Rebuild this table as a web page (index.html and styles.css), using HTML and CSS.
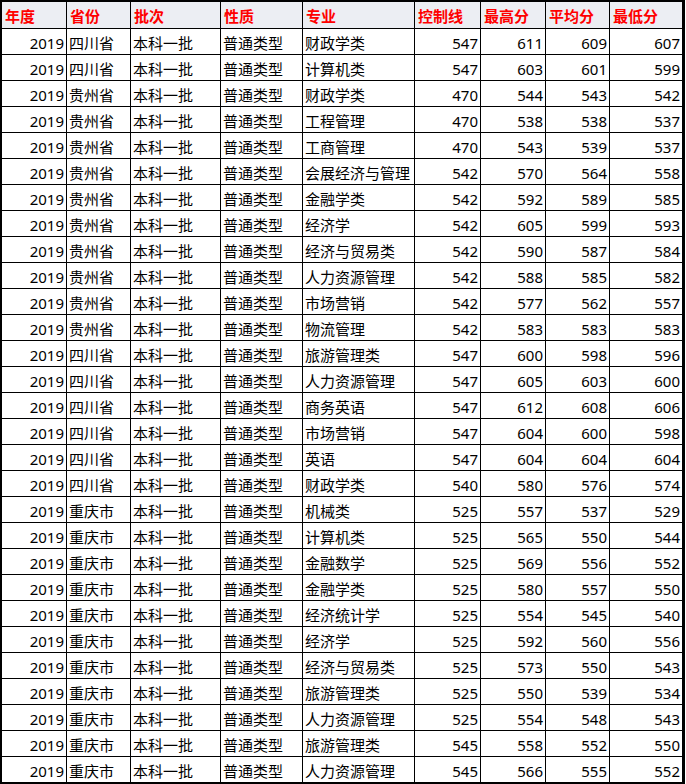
FILE: index.html
```html
<!DOCTYPE html>
<html lang="zh">
<head>
<meta charset="utf-8">
<link rel="stylesheet" href="styles.css">
</head>
<body>
<div class="sheet">
  <div class="row head">
    <div class="c">年度</div><div class="c">省份</div><div class="c">批次</div><div class="c">性质</div><div class="c">专业</div><div class="c">控制线</div><div class="c">最高分</div><div class="c">平均分</div><div class="c">最低分</div>
  </div>
  <div class="row"><div class="c n">2019</div><div class="c">四川省</div><div class="c">本科一批</div><div class="c">普通类型</div><div class="c">财政学类</div><div class="c n">547</div><div class="c n">611</div><div class="c n">609</div><div class="c n">607</div></div>
  <div class="row"><div class="c n">2019</div><div class="c">四川省</div><div class="c">本科一批</div><div class="c">普通类型</div><div class="c">计算机类</div><div class="c n">547</div><div class="c n">603</div><div class="c n">601</div><div class="c n">599</div></div>
  <div class="row"><div class="c n">2019</div><div class="c">贵州省</div><div class="c">本科一批</div><div class="c">普通类型</div><div class="c">财政学类</div><div class="c n">470</div><div class="c n">544</div><div class="c n">543</div><div class="c n">542</div></div>
  <div class="row"><div class="c n">2019</div><div class="c">贵州省</div><div class="c">本科一批</div><div class="c">普通类型</div><div class="c">工程管理</div><div class="c n">470</div><div class="c n">538</div><div class="c n">538</div><div class="c n">537</div></div>
  <div class="row"><div class="c n">2019</div><div class="c">贵州省</div><div class="c">本科一批</div><div class="c">普通类型</div><div class="c">工商管理</div><div class="c n">470</div><div class="c n">543</div><div class="c n">539</div><div class="c n">537</div></div>
  <div class="row"><div class="c n">2019</div><div class="c">贵州省</div><div class="c">本科一批</div><div class="c">普通类型</div><div class="c">会展经济与管理</div><div class="c n">542</div><div class="c n">570</div><div class="c n">564</div><div class="c n">558</div></div>
  <div class="row"><div class="c n">2019</div><div class="c">贵州省</div><div class="c">本科一批</div><div class="c">普通类型</div><div class="c">金融学类</div><div class="c n">542</div><div class="c n">592</div><div class="c n">589</div><div class="c n">585</div></div>
  <div class="row"><div class="c n">2019</div><div class="c">贵州省</div><div class="c">本科一批</div><div class="c">普通类型</div><div class="c">经济学</div><div class="c n">542</div><div class="c n">605</div><div class="c n">599</div><div class="c n">593</div></div>
  <div class="row"><div class="c n">2019</div><div class="c">贵州省</div><div class="c">本科一批</div><div class="c">普通类型</div><div class="c">经济与贸易类</div><div class="c n">542</div><div class="c n">590</div><div class="c n">587</div><div class="c n">584</div></div>
  <div class="row"><div class="c n">2019</div><div class="c">贵州省</div><div class="c">本科一批</div><div class="c">普通类型</div><div class="c">人力资源管理</div><div class="c n">542</div><div class="c n">588</div><div class="c n">585</div><div class="c n">582</div></div>
  <div class="row"><div class="c n">2019</div><div class="c">贵州省</div><div class="c">本科一批</div><div class="c">普通类型</div><div class="c">市场营销</div><div class="c n">542</div><div class="c n">577</div><div class="c n">562</div><div class="c n">557</div></div>
  <div class="row"><div class="c n">2019</div><div class="c">贵州省</div><div class="c">本科一批</div><div class="c">普通类型</div><div class="c">物流管理</div><div class="c n">542</div><div class="c n">583</div><div class="c n">583</div><div class="c n">583</div></div>
  <div class="row"><div class="c n">2019</div><div class="c">四川省</div><div class="c">本科一批</div><div class="c">普通类型</div><div class="c">旅游管理类</div><div class="c n">547</div><div class="c n">600</div><div class="c n">598</div><div class="c n">596</div></div>
  <div class="row"><div class="c n">2019</div><div class="c">四川省</div><div class="c">本科一批</div><div class="c">普通类型</div><div class="c">人力资源管理</div><div class="c n">547</div><div class="c n">605</div><div class="c n">603</div><div class="c n">600</div></div>
  <div class="row"><div class="c n">2019</div><div class="c">四川省</div><div class="c">本科一批</div><div class="c">普通类型</div><div class="c">商务英语</div><div class="c n">547</div><div class="c n">612</div><div class="c n">608</div><div class="c n">606</div></div>
  <div class="row"><div class="c n">2019</div><div class="c">四川省</div><div class="c">本科一批</div><div class="c">普通类型</div><div class="c">市场营销</div><div class="c n">547</div><div class="c n">604</div><div class="c n">600</div><div class="c n">598</div></div>
  <div class="row"><div class="c n">2019</div><div class="c">四川省</div><div class="c">本科一批</div><div class="c">普通类型</div><div class="c">英语</div><div class="c n">547</div><div class="c n">604</div><div class="c n">604</div><div class="c n">604</div></div>
  <div class="row"><div class="c n">2019</div><div class="c">四川省</div><div class="c">本科一批</div><div class="c">普通类型</div><div class="c">财政学类</div><div class="c n">540</div><div class="c n">580</div><div class="c n">576</div><div class="c n">574</div></div>
  <div class="row"><div class="c n">2019</div><div class="c">重庆市</div><div class="c">本科一批</div><div class="c">普通类型</div><div class="c">机械类</div><div class="c n">525</div><div class="c n">557</div><div class="c n">537</div><div class="c n">529</div></div>
  <div class="row"><div class="c n">2019</div><div class="c">重庆市</div><div class="c">本科一批</div><div class="c">普通类型</div><div class="c">计算机类</div><div class="c n">525</div><div class="c n">565</div><div class="c n">550</div><div class="c n">544</div></div>
  <div class="row"><div class="c n">2019</div><div class="c">重庆市</div><div class="c">本科一批</div><div class="c">普通类型</div><div class="c">金融数学</div><div class="c n">525</div><div class="c n">569</div><div class="c n">556</div><div class="c n">552</div></div>
  <div class="row"><div class="c n">2019</div><div class="c">重庆市</div><div class="c">本科一批</div><div class="c">普通类型</div><div class="c">金融学类</div><div class="c n">525</div><div class="c n">580</div><div class="c n">557</div><div class="c n">550</div></div>
  <div class="row"><div class="c n">2019</div><div class="c">重庆市</div><div class="c">本科一批</div><div class="c">普通类型</div><div class="c">经济统计学</div><div class="c n">525</div><div class="c n">554</div><div class="c n">545</div><div class="c n">540</div></div>
  <div class="row"><div class="c n">2019</div><div class="c">重庆市</div><div class="c">本科一批</div><div class="c">普通类型</div><div class="c">经济学</div><div class="c n">525</div><div class="c n">592</div><div class="c n">560</div><div class="c n">556</div></div>
  <div class="row"><div class="c n">2019</div><div class="c">重庆市</div><div class="c">本科一批</div><div class="c">普通类型</div><div class="c">经济与贸易类</div><div class="c n">525</div><div class="c n">573</div><div class="c n">550</div><div class="c n">543</div></div>
  <div class="row"><div class="c n">2019</div><div class="c">重庆市</div><div class="c">本科一批</div><div class="c">普通类型</div><div class="c">旅游管理类</div><div class="c n">525</div><div class="c n">550</div><div class="c n">539</div><div class="c n">534</div></div>
  <div class="row"><div class="c n">2019</div><div class="c">重庆市</div><div class="c">本科一批</div><div class="c">普通类型</div><div class="c">人力资源管理</div><div class="c n">525</div><div class="c n">554</div><div class="c n">548</div><div class="c n">543</div></div>
  <div class="row"><div class="c n">2019</div><div class="c">重庆市</div><div class="c">本科一批</div><div class="c">普通类型</div><div class="c">旅游管理类</div><div class="c n">545</div><div class="c n">558</div><div class="c n">552</div><div class="c n">550</div></div>
  <div class="row last"><div class="c n">2019</div><div class="c">重庆市</div><div class="c">本科一批</div><div class="c">普通类型</div><div class="c">人力资源管理</div><div class="c n">545</div><div class="c n">566</div><div class="c n">555</div><div class="c n">552</div></div>
</div>
</body>
</html>
```

FILE: styles.css
```css
html, body {
  margin: 0;
  padding: 0;
  background: #ffffff;
}

.sheet {
  width: 680px;
  border-style: solid;
  border-color: #000000;
  border-width: 2px 3px 2px 2px;
  font-family: "Noto Sans", "Noto Sans CJK SC", sans-serif;
  font-size: 15px;
  color: #000000;
}

.row {
  display: grid;
  grid-template-columns: 65px 64px 90px 82px 112px 66px 65px 64px 72px;
  height: 26px;
}

.row.head {
  height: 27px;
  background: #eceef3;
}

.row.last {
  height: 25px;
}

.c {
  box-sizing: border-box;
  border-right: 1px solid #000000;
  border-bottom: 1px solid #000000;
  padding: 3px 2px 0 2px;
  line-height: 22px;
  white-space: nowrap;
  overflow: hidden;
}

.row .c:last-child {
  border-right: none;
}

.row.last .c {
  border-bottom: none;
}

.head .c {
  color: #ff0000;
  font-weight: bold;
  line-height: 23px;
  padding-left: 3px;
}

.c.n {
  text-align: right;
  padding-right: 2px;
}
```
